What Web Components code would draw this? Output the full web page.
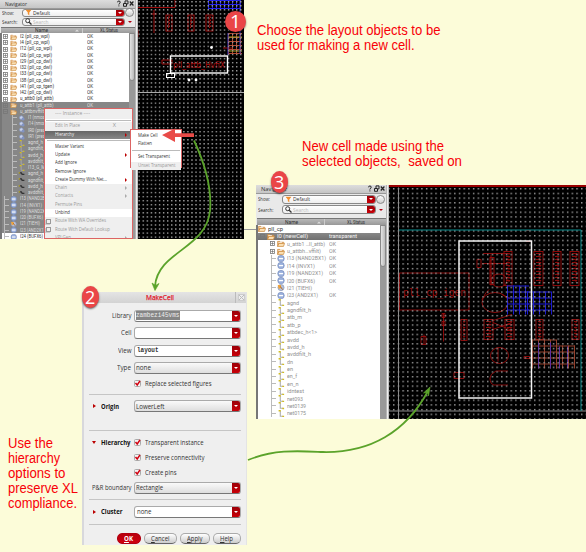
<!DOCTYPE html>
<html lang="en"><head><meta charset="utf-8"><title>Make Cell</title>
<style>
html,body{margin:0;width:586px;height:552px;overflow:hidden;background:#fcfcd9;font-family:"Open Sans","Noto Sans",sans-serif}
</style></head><body>
<make-cell-guide></make-cell-guide>
<script>
const define=(name,html,setup)=>customElements.define(name,class extends HTMLElement{
  connectedCallback(){
    if(this.shadowRoot)return;
    const root=this.attachShadow({mode:'open'});
    root.innerHTML=typeof html==='function'?html(this):html;
    if(setup)setup(this,root);
  }
});
const fit=(w,t)=>`<fit-text w="${w}">${t}</fit-text>`;

define('drop-button',`<style>:host{display:flex;align-items:center;justify-content:center;width:8px;background:linear-gradient(#9c0008,#c90008);border-radius:0 2px 2px 0;flex:none}
i{border:2px solid transparent;border-top:2px solid #fff;border-bottom:0}</style><i></i>`);

define('tree-icon',h=>{
  const k=h.getAttribute('kind');
  const art={
    folder:'<path d="M.6 7.2V1.5h2.5l.7.9h3.8v1.4" fill="#e3a45c" stroke="#c9883c" stroke-width=".6"/><path d="M.6 7.2 2.3 3.8h6.2L7.3 7.2z" fill="#fbe0b4" stroke="#c9883c" stroke-width=".8"/><path d="M1.5 2.8h4" stroke="#fff" stroke-width=".8"/>',
    cell:'<circle cx="4.5" cy="4" r="3.7" fill="#9bb0dc" stroke="#6c82b5" stroke-width=".6"/><path d="M2.2 4h4.6" stroke="#fff" stroke-width="1.5"/>',
    alt:'<circle cx="4.5" cy="4" r="3.5" fill="#b8c0d5" stroke="#7788ad" stroke-width=".6"/><path d="M.8 1.2h3.6v3.4L2 5.5z" fill="#f0a33a"/><path d="m3.8 2.8 2.5 3.5" stroke="#a75d1c"/>',
    net:'<path d="M3.7 1v6h3.2" fill="none" stroke="#aaa" stroke-width="1.2"/><path d="M1.8 0h2.5v1.6H1.8zM6 6.3h2v1.7H6z" fill="#d2bd20"/>',
    fet:'<circle cx="4" cy="3.6" r="2.5" fill="#c8d2eb" stroke="#8193bc"/><circle cx="6.2" cy="5.3" r="2" fill="#8294c2"/>',
    pin:'<path d="M1 2.5h3l1 2h3" fill="none" stroke="#333" stroke-width="1.7"/><path d="M.5 1.5H2v1.7H.5z" fill="#d2bd20"/>'
  };
  return `<style>:host{display:block;flex:none}svg{display:block;width:100%;height:100%}</style><svg viewBox="0 0 9 8">${art[k]||''}</svg>`;
});

define('tree-row',h=>{
  const a=n=>h.getAttribute(n)||'';
  const m=a('mark');
  return `<style>
:host{display:flex;align-items:center;height:var(--rh);flex:none;font-family:Roboto,sans-serif;font-size:var(--fs);line-height:1;white-space:nowrap;color:var(--ink);box-sizing:border-box}
.lead{width:${a('lead')}px;display:flex;align-items:center;justify-content:flex-end;flex:none;height:100%}
.tw{width:5px;height:5px;margin-right:2px;flex:none}
.br{width:5px;height:100%;border-left:1px solid #bbb;display:flex;align-items:center}.br:after{content:"";width:4px;height:1px;background:#bbb}
tree-icon{width:var(--iw);height:calc(var(--rh) - .2px)}
.name{width:calc(var(--status) - ${a('lead')}px - var(--iw));padding-left:2.4px;box-sizing:border-box;display:block}
</style><span class="lead">${m==='+'||m==='-'?`<svg class="tw" viewBox="0 0 5 5" fill="none" stroke="#777"><rect x=".5" y=".5" width="4" height="4" stroke-width=".8"/><path d="M1.200 2.500h2.600${m==='+'?'M2.500 1.200v2.600':''}" stroke-width=".8"/></svg>`:m==='l'?'<span class="br"></span>':''}</span><tree-icon kind="${a('kind')}"></tree-icon><span class="name">${fit(a('w'),h.textContent)}</span>${a('status')?fit(a('sw')||6,a('status')):''}`;
});

define('nav-panel',h=>`<style>
:host{display:flex;flex-direction:column;background:#e9e9e9;overflow:hidden;box-sizing:border-box;color:#333;line-height:1}
.title{height:var(--th);display:flex;align-items:center;background:linear-gradient(#ddd,#c5c5c5);border-bottom:1px solid #999;padding:0 1px 0 5px;font-size:6px;box-sizing:border-box;flex:none}
.title svg{margin-left:auto;width:18px;height:7px;flex:none}
.f{height:var(--fh);display:flex;align-items:center;padding:0 1px 0 2px;font-size:6px;flex:none}
.f>span{width:var(--lw)}
.box{display:flex;flex:1;height:calc(var(--fh) - 1.500px);background:linear-gradient(#fff,#eee);border:.6px solid #888;border-radius:3px;box-sizing:border-box;align-items:center}
.box svg{width:7px;height:7px;margin:0 1px 0 2px;flex:none}
.box drop-button{height:100%;margin-left:auto}
.go{width:9px;display:flex;justify-content:center;align-items:center}
.ball{width:7px;height:7px;border:.7px solid #888;border-radius:5px;background:linear-gradient(#fff,#ccc);flex:none}
.tri{border:2px solid transparent;border-top:2.5px solid #b00010;border-bottom:0}
.head{height:var(--hh);background:linear-gradient(#b8b8b8,#989898);border-top:1px solid #777;display:flex;align-items:center;font:5px/1 Roboto,sans-serif;color:#333;box-sizing:border-box;flex:none;margin:var(--hm) 0 0 1px}
.head span:first-child{width:calc(var(--status) - 3px);height:100%;display:flex;align-items:center;border-right:.7px solid #ccc;box-sizing:border-box;padding:0 3px 0 calc(var(--status)*.4)}
.head svg{margin-left:auto;width:4px;height:3px}
.head span:last-child{flex:1;text-align:center}
.body{flex:1;display:flex;min-height:0;border-left:2px solid #777}
.rows{flex:1;background:#fff;min-width:0}
.bar{width:6px;background:#999;flex:none}
.bar i{display:block;height:var(--sb);background:linear-gradient(90deg,#e4e4e4,#bbb);border:.5px solid #888;border-radius:0 0 3px 3px;box-sizing:border-box}
</style>
<div class="title">${fit(h.getAttribute('tw'),'Navigator')}<svg viewBox="0 0 18 7" fill="none" stroke="#222"><path d="M1.500 2.300q0-1.300 1.400-1.300t1.300 1.300q0 .8-1.300 1.600v.6M2.900 5.400v1"/><path d="M7.500 3.500h3v2.800h-3zM9 3V.9h3v3h-1"/><path d="m13.800 1.500 3.600 4M17.400 1.500l-3.600 4" stroke-width="1.200"/></svg></div>
<div class="f"><span>${fit(12,'Show:')}</span><div class="box"><svg viewBox="0 0 7 7"><path d="M.5.8h6L4.300 3.500v3L2.800 5V3.500z" fill="#f09030"/></svg>${fit(17,'Default')}<drop-button></drop-button></div><div class="go"><i class="ball"></i></div></div>
<div class="f"><span>${fit(15.5,'Search:')}</span><div class="box" style="color:#bbb"><svg viewBox="0 0 7 7"><circle cx="2.700" cy="2.700" r="2" fill="none" stroke="#333"/><path d="m4.200 4.200 2.300 2.300" stroke="#333" stroke-width="1.300"/></svg>${fit(15.5,'Search')}<drop-button></drop-button></div><div class="go"><i class="tri"></i></div></div>
<div class="head"><span>${fit(13,'Name')}<svg viewBox="0 0 4 3"><path d="M0 2.500 2 .5l2 2z" fill="#ddd"/></svg></span><span>${fit(18,'XL Status')}</span></div>
<div class="body"><div class="rows"><slot></slot></div><div class="bar"><i></i></div></div>`);

define('menu-item',h=>{
  const off=h.hasAttribute('off');
  return `<style>:host{display:flex;align-items:center;height:${h.getAttribute('h')||8.25}px;padding:0 5px 0 var(--mp,10px);font-size:5.6px;line-height:1;white-space:nowrap;color:${off?'#999':'#333'};background:${off?'#efefef':'#fff'};box-sizing:border-box;flex:none}
:host([active]){background:linear-gradient(#666,#888);color:#f2f2f2}
.ico{width:3px;height:3px;border:1px solid #999;margin:0 4px 0 -9px;box-shadow:-1px 1px #ccc;flex:none}
i{margin-left:auto;border:2px solid transparent;border-left:2.400px solid ${off?'#aaa':'#b00'};border-right:0}
u{text-decoration:none;margin-left:auto;margin-right:11px}</style>${h.hasAttribute('ico')?'<span class="ico"></span>':''}${fit(h.getAttribute('w'),h.textContent)}${h.hasAttribute('sub')?'<i></i>':''}${h.hasAttribute('key')?`<u>${h.getAttribute('key')}</u>`:''}`;
});
define('popup-menu',`<style>:host{display:flex;flex-direction:column;border:1px solid #dc6464;background:#fff;box-sizing:border-box;overflow:hidden}
::slotted(hr){border:0;border-top:1px solid #bbb;margin:var(--hr,1px) 1px;height:0;flex:none}</style><slot></slot>`);

define('form-field',h=>`<style>:host{display:flex;height:12px;flex:1;border:1px solid #aaa;border-bottom-color:#777;border-radius:3px;background:#fff;box-sizing:border-box;align-items:center;font-size:7.200px;line-height:1;color:#333}
:host([combo]){background:linear-gradient(#fafafa,#dedede)}
:host([mono]) fit-text{font-family:"Liberation Mono",monospace;font-weight:bold;font-size:7.500px}
:host([sel]) fit-text{background:#858585;color:#eee;font-weight:normal;height:9px;line-height:9px}
drop-button{height:100%;margin-left:auto}</style>${h.textContent?`<span style="padding-left:${h.getAttribute('p')||1}px">${fit(h.getAttribute('w'),h.textContent)}</span>`:''}<drop-button></drop-button>`);
define('form-row',h=>{
  const t=h.getAttribute('label')||'',b=h.getAttribute('tri');
  return `<style>:host{display:flex;align-items:center;height:var(--h);flex:none;font-size:7.500px;line-height:1;color:#333}
.l{width:${b?42:45}px;display:flex;justify-content:${b?'flex-start':'flex-end'};align-items:center;padding-right:${b?0:3}px;box-sizing:border-box;white-space:nowrap;${b?'font-weight:bold;color:#111':''}}
i{flex:none;margin:0 5px 0 4px;${b==='r'?'border:2px solid transparent;border-left:3px solid #b00;border-right:0':'border:2px solid transparent;border-top:3px solid #b00;border-bottom:0;margin-left:3px'}}
.g{display:flex;flex:1;${b?'margin-left:3px':''}}</style><span class="l">${b?'<i></i>':''}${t?fit(h.getAttribute('lw'),t):''}</span><span class="g"><slot></slot></span>`;
});
define('check-box',h=>`<style>:host{display:flex;align-items:center;gap:3.500px;font-size:7.200px;line-height:1}svg{width:7px;height:7px;overflow:visible}</style><svg viewBox="0 0 7 7"><rect x=".5" y=".5" width="6" height="6" rx="1" fill="#f5f5f5" stroke="#aaa"/><path d="m1.500 3 1.700 2L6 .8" fill="none" stroke="#d00010" stroke-width="1.500"/></svg>${fit(h.getAttribute('w'),h.textContent)}`);
define('push-button',h=>`<style>:host{display:flex;align-items:center;justify-content:center;height:11px;border:1px solid #aaa;border-bottom-color:#666;border-radius:5px;background:linear-gradient(#fff,#ccc);box-sizing:border-box;font-size:7.200px;line-height:1;color:#333}
:host([ok]){background:linear-gradient(#b8000c,#cf0010);border-color:#b00010;color:#fff;font-weight:bold}</style>${fit(h.getAttribute('w'),h.innerHTML)}`);

define('make-cell-dialog',`<style>
:host{display:flex;flex-direction:column;background:#efefef;border-left:2px solid #d8d8dc;border-right:1px solid #e4e4e4;box-sizing:border-box;overflow:hidden}
header{height:11px;display:flex;align-items:center;background:linear-gradient(#e4e4e4,#d3d3d3);font-size:7.400px;line-height:1;color:#e0182a;-webkit-text-stroke:.25px;flex:none}
header span{flex:1;text-align:center}
header i{width:10px;height:11px;border-left:1px solid #bbb;display:grid;place-items:center;margin-left:-1px}
.b{display:flex;flex-direction:column;padding:3.800px 5.500px 0 5px}
hr{border:0;border-top:1px solid #c5c5c5;margin:0;height:0;flex:none}
.btn{display:flex;padding:8.300px 0 0 28px;gap:3px}
</style>
<header><span>${fit(28,'MakeCell')}</span><i><svg width="7" height="7"><rect x=".5" y=".5" width="6" height="6" fill="#eee" stroke="#ccc"/><path d="m1 1 5 5M6 1 1 6" stroke="#bbb"/></svg></i></header>
<div class="b">
<form-row style="--h:17.5px" label="Library" lw="19.5"><form-field mono sel w="43.5">zambezi45vms</form-field></form-row>
<form-row style="--h:17.5px" label="Cell" lw="10.5"><form-field></form-field></form-row>
<form-row style="--h:17.5px" label="View" lw="13.5"><form-field mono p="1.5" w="21.5">layout</form-field></form-row>
<form-row style="--h:17.5px" label="Type" lw="14"><form-field combo w="15">none</form-field></form-row>
<form-row style="--h:14px"><check-box w="66.5">Replace selected figures</check-box></form-row>
<div style="height:3px"></div><hr>
<form-row style="--h:23px" tri="r" label="Origin" lw="18"><form-field combo w="28.5">LowerLeft</form-field></form-row>
<div style="height:12px"></div><hr>
<form-row style="--h:23px" tri="d" label="Hierarchy" lw="29.5"><check-box w="58.5">Transparent instance</check-box></form-row>
<form-row style="--h:7.5px"><check-box w="59.5">Preserve connectivity</check-box></form-row>
<form-row style="--h:22.5px"><check-box w="31.5">Create pins</check-box></form-row>
<form-row style="--h:8.5px" label="P&amp;R boundary" lw="39.5"><form-field combo w="27">Rectangle</form-field></form-row>
<div style="height:6.5px"></div><hr>
<form-row style="--h:24px" tri="r" label="Cluster" lw="21.5"><form-field p="1.5" w="14.5">none</form-field></form-row><hr>
<div class="btn"><push-button ok style="width:25px" w="9"><u>O</u>K</push-button><push-button style="width:35px" w="18.5"><u>C</u>ancel</push-button><push-button style="width:32px" w="15.5"><u>A</u>pply</push-button><push-button style="width:29px" w="13"><u>H</u>elp</push-button></div>
</div>`);

/* Device outlines and metal meshes for the layout canvases */
const device=(x,y,w,h)=>{let s=`<rect x="${x}" y="${y}" width="${w}" height="${h}"/>`;for(let i=2;i<h-2;i+=3)s+=`<path d="M${x+2} ${y+i}h${w-4}l-2 2"/>`;return s;};
const mesh=(x,y,w,h,p,c)=>{let d='';for(let i=0;i<=w;i+=p)d+=`M${x+i+.5} ${y}v${h}`;for(let i=0;i<=h;i+=p)d+=`M${x} ${y+i+.5}h${w}`;return `<path d="${d}" stroke="${c}"/>`;};
define('layout-one',`<style>:host{display:block;background:#000}svg{display:block}text{font-family:"DejaVu Sans",sans-serif}</style>
<svg width="106" height="239" viewBox="138 0 106 239"><defs><pattern id="d" width="4.06" height="4.06" patternUnits="userSpaceOnUse" x="138.5" y="1"><rect width="1.4" height="1.4" fill="#a0a0a0"/></pattern></defs>
<rect x="138" width="106" height="239" fill="#000"/>
<g fill="none" stroke="#b00d0d" stroke-width=".9"><path d="M138 7.500h37V0M154 10v23M151 14h6M138 30v7M162 60h10v4h-10zM223 48h9"/>${device(166,15,6,16)}${device(188,15,6,16)}${device(206,15,7,16)}</g>
${mesh(208,0,32,10,4,'#2222e8')}${mesh(228,33,14,20,4,'#b4482e')}<path d="M228 37h14M228 51h14" stroke="#a5a522"/><path d="M228 33v22M240 0v54" stroke="#3932bd"/>
<rect width="106" height="239" x="138" fill="url(#d)"/>
<path d="M138 92.500h106" stroke="#aaa"/><text x="173" y="68" font-size="8.500" textLength="52" lengthAdjust="spacingAndGlyphs" fill="#a80d0d">pll_attb_HvfiX</text>
<g fill="none" stroke="#fff" stroke-width="1.400"><rect x="170.500" y="56" width="57" height="17"/><rect x="166.500" y="73.500" width="8" height="4" stroke-width="1"/></g><g fill="#fff"><circle cx="189" cy="80" r="1.400"/><circle cx="196" cy="80" r="1.400"/><circle cx="211.500" cy="47.500" r="1.400"/></g></svg>`);
define('layout-two',`<style>:host{display:block;background:#000}svg{display:block}text{font-family:"DejaVu Sans Mono",monospace}</style>
<svg width="197" height="234" viewBox="389 184.5 197 234"><defs><pattern id="d" width="4.7" height="4.7" patternUnits="userSpaceOnUse" x="393" y="187.5"><rect width="1.45" height="1.45" fill="#999"/></pattern></defs>
<rect x="389" y="184" width="197" height="235" fill="#000"/>
<g fill="none" stroke="#990b0b" stroke-width=".9"><path d="M399.500 272.500h69.500v37H399.500zM483 253h25M482 263h25M477 259h4v8h-4zM491 254v31M443.500 313v28M442 313h3v4h-3zM442 321h3v4h-3zM421 336h5v8h-5zM424 334v10M454 372h10v6h-10zM526 230h5M526 241h5M498 347v14M524 356h6v2h-6zM508 370.500h-12q-6 3-6 7 0 6 4 7h14M493 320l19-6M493 322l19 8M493 329l19-7M482 299q4-8 7-10M502 294l8 4"/>
<ellipse cx="499" cy="280" rx="8" ry="6.500"/><ellipse cx="495" cy="302" rx="13" ry="10"/><ellipse cx="499.500" cy="355" rx="9" ry="8"/>
${device(504,251,8,34)}${device(534,251,9,34)}${device(553,251,8,34)}${device(570,251,9,34)}${device(461,319,6,21)}${device(484,319,9,20)}${device(505,319,9,20)}${device(536,319,7,20)}${device(572,319,7,20)}${device(490,257,4,27)}</g>
<text x="403" y="295" font-size="10.500" textLength="63" lengthAdjust="spacingAndGlyphs" fill="#960b0b">pll_cp_igen</text>
${mesh(507,285,22,29,6,'#1c1cd0')}${mesh(527,291,24,23,6,'#1c1cd0')}${mesh(532,339,24,29,6,'#95402c')}${mesh(556,345,19,23,6,'#95402c')}<path d="M538.500 342v26M550.500 342v26M559.500 346v22M567.500 346v22" stroke="#6030a0"/>
<rect x="389" y="184" width="197" height="235" fill="url(#d)"/>
<path d="M389 185.500h197" stroke="#c00" stroke-width="1.500"/><path d="M398.500 187v232M389 410.500h197" stroke="#8c8c8c"/><path d="M399 229.500h182v181" fill="none" stroke="#098e8e"/>
<rect x="459" y="240.500" width="72.500" height="157" fill="none" stroke="#f4f4f4" stroke-width="1.500"/></svg>`);

define('step-badge',`<style>:host{display:grid;place-items:center;border-radius:50%;background:#ea4547;color:#fff;font:19px/1 "Open Sans",sans-serif;box-shadow:0 1px 2px #0009}</style><slot></slot>`);
define('guide-note',`<style>:host{display:flex;flex-direction:column;color:#f80008;font:14px/15px "Liberation Sans",Arial,sans-serif;white-space:pre}</style><slot></slot>`);

const R=(lead,mark,kind,w,t,st='',sw='',css='')=>`<tree-row lead="${lead}" mark="${mark}" kind="${kind}" w="${w}" status="${st}" sw="${sw}" style="${css}">${t}</tree-row>`;
const dark='--ink:#ddd;background:#878787';
const t1=[['I2 (pll_cp_wpl)',29.5],['I4 (pll_cp_wpl)',29.5],['I12 (pll_cp_wpl)',32],['I26 (pll_cp_wpl)',32],['I29 (pll_cp_dwl)',32],['I32 (pll_cp_dwl)',32],['I33 (pll_cp_dwl)',32],['I38 (pll_cp_dwl)',32],['I41 (pll_cp_tgen)',34],['I42 (pll_cp_dwl)',32],['u_attb0 (pll_attb)',33.5]].map(r=>R(8,'+','folder',r[1],r[0],'OK')).join('')
+R(8,'+','folder',33.5,'u_attb1 (pll_attb)','OK','',dark)+R(8,'-','folder',24,'u_attbnvffilt','','',dark)
+['I1 (nmos','I14 (nmos','IR0 (pres','IR1 (pres'].map((t,i)=>R(16,'l','fet',[16.500,17,17,17][i],t,'','',dark)).join('')
+[['agnd_h',15],['agndfilt_',17],['avdd_h',15],['avddfilt_',17],['I13_G_M',17]].map(r=>R(16,'l','net',r[1],r[0],'','',dark)).join('')
+[['agnd_h',15],['agndfilt_',17],['avdd_h',15],['avddfilt_',17]].map(r=>R(16,'l','pin',r[1],r[0],'','',dark)).join('')
+[['I13 (NAND2B',25],['I14 (INVX1)',22],['I19 (NAND2X',25],['I20 (BUFX6)',23],['I21 (TIEHI)',20],['I23 (AND2X1)',25]].map((r,i)=>R(8,'l',i==4?'alt':'cell',r[1],r[0],'','',dark)).join('')+R(8,'l','cell',23,'I24 (BUFX6)');
const t2=R(0,'','folder',15,'pll_cp','','','--ink:#333')+R(9,'-','folder',31,'I0 (newCell)','transparent',28,'--ink:#f5f5f5;background:linear-gradient(#888,#707070)')
+R(19,'+','folder',38,'u_attb1 …ll_attb)','OK',7)+R(19,'+','folder',34,'u_attbh…vffilt)','OK',7)
+[['I13 (NAND2BX1)',39],['I14 (INVX1)',28],['I19 (NAND2X1)',36],['I20 (BUFX6)',28],['I21 (TIEHI)',25],['I23 (AND2X1)',31]].map((r,i)=>R(19,'l',i==4?'alt':'cell',r[1],r[0],i==4?'':'OK',7)).join('')
+[['agnd',12],['agndfilt_h',24],['atb_m',15],['atb_p',13.5],['atbdec_h&lt;1&gt;',30],['avdd',12],['avdd_h',17.500],['avddfilt_h',24],['dn',6],['en',6],['en_f',10],['en_n',11.500],['idntest',17],['net093',16],['net0139',19],['net0175',19]].map(r=>R(19,'l','net',r[1],r[0])).join('');

define('make-cell-guide',`<style>
:host{display:block;position:relative;width:586px;height:552px;background:#fcfcd9;overflow:hidden}
.w,.o{position:absolute;display:flex;overflow:hidden}.o{overflow:visible}
.edge{width:3px;background:linear-gradient(90deg,#999,#eee,#aaa);flex:none}
</style>
<div class="w" style="left:0;top:0;width:244px;height:238.500px">
 <nav-panel tw="22" style="width:135px;--th:8.500px;--fh:8.900px;--lw:20px;--hh:6.500px;--hm:.7px;--status:85px;--rh:6.25px;--fs:5.300px;--iw:7.500px;--ink:#333;--sb:48px">${t1}</nav-panel><div class="edge"></div><layout-one></layout-one></div>
<div class="w" style="left:256px;top:184.500px;width:330px;height:234px">
 <nav-panel tw="26" style="width:130px;--th:9.500px;--fh:10.500px;--lw:24px;--hh:7.500px;--hm:2.800px;--status:71px;--rh:7.385px;--fs:6.200px;--iw:8px;--ink:#909090;--sb:42px">${t2}</nav-panel><div class="edge"></div><layout-two></layout-two></div>
<popup-menu class="o" style="left:44px;top:108px;width:89px;height:131px;display:flex;overflow:hidden">
<menu-item h="9.500" off w="35">---- Instance ----</menu-item><hr><menu-item off h="9" w="25" key="X">Edit In Place</menu-item><menu-item active sub h="8" w="19">Hierarchy</menu-item><hr style="margin:1.500px">
<menu-item w="29">Master Variant</menu-item><menu-item sub w="15">Update</menu-item><menu-item w="22">Add Ignore</menu-item><menu-item w="31">Remove Ignore</menu-item><menu-item sub w="52">Create Dummy With Net...</menu-item><menu-item off sub w="12">Chain</menu-item><menu-item off sub w="18">Contacts</menu-item><menu-item off w="27">Permute Pins</menu-item><menu-item w="15">Unbind</menu-item><menu-item off ico h="8.700" w="51">Route With WA Overrides</menu-item><menu-item off ico h="8.700" w="55">Route With Default Lookup</menu-item><menu-item off sub h="7.800" w="16">VPLGen</menu-item></popup-menu>
<popup-menu class="o" style="left:130px;top:129px;width:52px;height:39px;--mp:7px;--hr:1.500px"><div style="height:1.500px;flex:none"></div><menu-item w="19.500">Make Cell</menu-item><menu-item w="14">Flatten</menu-item><hr><menu-item h="9.500" w="32">Set Transparent</menu-item><menu-item off h="8" w="37.500">Unset Transparent</menu-item></popup-menu>
<make-cell-dialog class="o" style="left:82px;top:292px;width:165px;height:253px;display:flex;overflow:hidden"></make-cell-dialog>
<svg class="o" style="left:0;top:0" width="586" height="552" fill="none"><path d="M244 229.500h12" stroke="#999"/>
<path d="M194 140.500C205 164 212 188 210 211 206 249 158 251 155 286" stroke="#5ba32b" stroke-width="1.800"/><path d="m152 283 3 7.500 4-7-3.500 2z" fill="#5ba32b" stroke="#5ba32b" stroke-width=".7"/>
<path d="M248 460C275 449 299 451 323 452 370 453 406 432 428 391" stroke="#5ba32b" stroke-width="1.800"/><path d="m423.500 393 6.500-6-1.500 9-1-4z" fill="#5ba32b" stroke="#5ba32b" stroke-width=".7"/>
<path d="M162 135l13-6.500v4.700h19v3.800h-19v5z" fill="#e94b48"/></svg>
<step-badge class="o" style="left:225px;top:11px;width:21px;height:21px;display:grid">1</step-badge>
<step-badge class="o" style="left:81.500px;top:285.500px;width:17.500px;height:22px;display:grid;font-size:18px">2</step-badge>
<step-badge class="o" style="left:270.500px;top:170.500px;width:17.500px;height:22px;display:grid;font-size:18px">3</step-badge>
<guide-note class="o" style="left:256.500px;top:23px">${fit(183.500,'Choose the layout objects to be')}${fit(157.500,'used for making a new cell.')}</guide-note>
<guide-note class="o" style="left:302px;top:139px">${fit(142,'New cell made using the')}${fit(160,'selected objects,  saved on')}</guide-note>
<guide-note class="o" style="left:8px;top:436px">${fit(45,'Use the')}${fit(52,'hierarchy')}${fit(57.500,'options to')}${fit(70,'preserve XL')}${fit(69,'compliance.')}</guide-note>`);

/* Stretches or condenses a label to the width given in its w attribute */
customElements.define('fit-text',class extends HTMLElement{
  connectedCallback(){
    if(this.shadowRoot)return;
    const root=this.attachShadow({mode:'open'});
    root.innerHTML='<style>:host{display:inline-block;white-space:pre;flex:none}span{display:inline-block;transform-origin:0 50%}</style><span><slot></slot></span>';
    const s=root.querySelector('span'),w=+this.getAttribute('w'),now=s.getBoundingClientRect().width;
    if(w&&now){this.style.width=w+'px';s.style.transform=`scaleX(${w/now})`;}
  }
});
</script></body></html>
